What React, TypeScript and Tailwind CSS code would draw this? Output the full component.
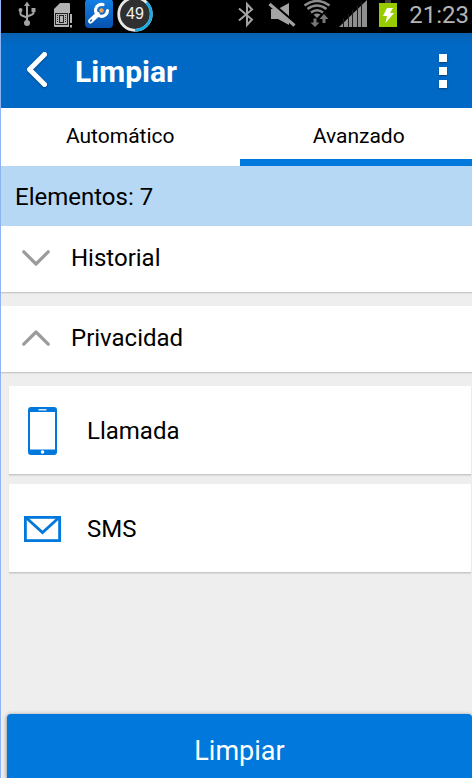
import * as React from "react";
import clsx from "clsx";

const UsbIcon = () => (
  <svg viewBox="15 0 26 28" className="h-7 w-[26px]" fill="none" stroke="#a3a3a3" strokeWidth="2" aria-label="USB">
    <path d="M27 4v18M20.500 9.500v4.500c0 2 6.500 2.500 6.500 4.500M33.500 9v4c0 2-6.500 2.500-6.500 4.500" />
    <path d="M27 1.500l3 4.500h-6z" fill="#a3a3a3" stroke="none" />
    <circle cx="27" cy="23" r="3" fill="#a3a3a3" stroke="none" />
    <circle cx="20.500" cy="10" r="2" fill="#a3a3a3" stroke="none" />
    <path d="M31.500 8h4v4h-4z" fill="#a3a3a3" stroke="none" />
  </svg>
);

const SimIcon = () => (
  <svg viewBox="51 0 24 28" className="h-7 w-6" fill="none" aria-label="SIM">
    <path d="M60 3h9a1 1 0 0 1 1 1v23H55a1 1 0 0 1-1-1V9z" fill="#b3b3b3" />
    <rect x="69" y="13" width="4" height="15" fill="#000" />
    <rect x="55.500" y="13.500" width="12" height="11" stroke="#222" />
    <rect x="59.500" y="15.500" width="4" height="7" stroke="#222" />
    <path d="M57.500 15v8M65.500 15v8" stroke="#222" strokeDasharray="1 1" />
    <path d="M70 14h2v9h-2zM70 25h2v2.500h-2z" fill="#b3b3b3" />
  </svg>
);

const WrenchIcon = () => (
  <svg viewBox="85 0 28 28" className="h-7 w-7" fill="none" aria-label="Herramientas">
    <defs>
      <linearGradient id="wrench" x1="0" y1="0" x2="0" y2="1">
        <stop offset="0" stopColor="#1380e6" />
        <stop offset="1" stopColor="#0752ae" />
      </linearGradient>
    </defs>
    <rect x="85" y="-1" width="28" height="29" rx="4" fill="url(#wrench)" />
    <path d="M97.500 14.500l-7 6.500" stroke="#fff" strokeWidth="5" strokeLinecap="round" />
    <path d="M103 4.500a6 6 0 1 0 4.500 6" stroke="#fff" strokeWidth="3.200" strokeLinecap="round" />
    <path d="M91.500 20l-1 1" stroke="#0a63c2" strokeWidth="1.500" strokeLinecap="round" />
    <circle cx="101.500" cy="10.500" r="2.200" fill="#f5a04c" />
  </svg>
);

const BadgeIcon = () => (
  <svg viewBox="117 -3 36 35" className="-mt-[3px] h-[35px] w-9" fill="none" aria-label="49">
    <circle cx="135" cy="14" r="16.300" fill="#303030" stroke="#e8e8e8" strokeWidth="2.800" />
    <path d="M146.500 2.500a16.300 16.300 0 0 1-11.500 27.800" stroke="#19ace6" strokeWidth="2.800" />
    <text x="135" y="19" textAnchor="middle" fill="#f2f2f2" className="font-['Liberation_Sans',sans-serif] text-[16px]">
      49
    </text>
  </svg>
);

const BluetoothIcon = () => (
  <svg viewBox="232 0 26 28" className="h-7 w-[26px]" fill="none" stroke="#a3a3a3" strokeWidth="2" aria-label="Bluetooth">
    <path d="M237 8.500l13 11-5 5.500V4l5 5.500-13 11" />
  </svg>
);

const MuteIcon = () => (
  <svg viewBox="268 0 28 28" className="h-7 w-7" fill="#a3a3a3" aria-label="Silencio">
    <path d="M271 9h7l11-6v22l-11-6h-7z" />
    <path d="M269.500 1.500l26 22" stroke="#000" strokeWidth="3" />
    <path d="M269.500 4l25 21.500" stroke="#a3a3a3" strokeWidth="3" />
  </svg>
);

const WifiIcon = () => (
  <svg viewBox="304 0 27 28" className="h-7 w-[27px]" fill="none" aria-label="Wi-Fi">
    <path d="M304.500 5.500q12.500-9 25 0M307.500 9q9.500-7 19 0M311 12.500q6-4.500 12 0" stroke="#8c8c8c" strokeWidth="2.500" />
    <path d="M313.500 14.500q3.500-2 7 0l-3.500 3.500z" fill="#8c8c8c" />
    <path d="M316.500 18.500v4h3l-4.500 4.500-4.500-4.500h3v-4zM322.500 23v-4h-3l4.500-5 4.500 5h-3v4z" fill="#777" />
  </svg>
);

const SignalIcon = () => (
  <svg viewBox="339 0 28 28" className="h-7 w-7" aria-label="Cobertura">
    <path d="M339 27L367 0v27z" fill="#8f8f8f" />
    <path d="M343.500 27V18M348.500 27V14M352.500 27V10M357.500 27V6M361.500 27V2" stroke="#1c1c1c" />
  </svg>
);

const BatteryIcon = () => (
  <svg viewBox="375 0 26 28" className="h-7 w-[26px]" aria-label="Cargando">
    <path d="M385 0h6v3h-6z" fill="#444" />
    <path d="M379 3h18v24h-18z" fill="#99cc00" />
    <path d="M387 8h6l-3 5h4l-8.500 10 1.500-7h-4z" fill="#fff" />
  </svg>
);

const PhoneIcon = () => (
  <svg viewBox="0 0 38 48" className="h-12 w-[38px]" aria-hidden="true">
    <rect x="4" y="0" width="29" height="48" rx="3" fill="#0078dc" />
    <rect x="6" y="5" width="25" height="37.500" fill="#fff" />
    <path d="M14.500 2h8v1.500h-8z" fill="#d5e9fa" />
    <circle cx="18.500" cy="45" r="1.800" fill="#fff" />
  </svg>
);

const MailIcon = () => (
  <svg viewBox="0 0 38 48" className="h-12 w-[38px]" fill="none" stroke="#0078dc" strokeWidth="2.800" aria-hidden="true">
    <rect x="1.400" y="12.400" width="34.200" height="23.200" />
    <path d="M2.500 13l16 14.500 16-14.500" />
  </svg>
);

const Chevron = ({ open }: { open: boolean }) => (
  <svg
    viewBox="0 0 28 16"
    className={clsx("h-4 w-7", open && "rotate-180")}
    fill="none"
    stroke="#9b9b9b"
    strokeWidth="3.200"
    strokeLinecap="round"
    strokeLinejoin="round"
    aria-hidden="true"
  >
    <path d="M1.800 1.800L14 14 26.200 1.800" />
  </svg>
);

interface SectionProps {
  title: string;
  defaultOpen?: boolean;
  children?: React.ReactNode;
}

const Section: React.FC<SectionProps> = ({ title, defaultOpen = false, children }) => {
  const [open, setOpen] = React.useState(defaultOpen);

  return (
    <section>
      <button
        type="button"
        aria-expanded={open}
        onClick={() => setOpen(!open)}
        className="flex h-[67px] w-full items-center gap-[21px] border-b border-[#c8c8c8] bg-white pb-[3px] pl-[21px] text-left text-2xl shadow-[0_1px_0_#e2e2e2]"
      >
        <Chevron open={open} />
        {title}
      </button>
      {open && children && <ul className="flex flex-col gap-[9px] py-[13px] pr-px pl-2">{children}</ul>}
    </section>
  );
};

const Item = ({ icon, label }: { icon: React.ReactNode; label: string }) => (
  <li className="flex h-[89px] items-center gap-[25px] border-b border-[#c8c8c8] bg-white pt-px pl-[15px] text-2xl shadow-[0_1px_1px_#dcdcdc]">
    {icon}
    {label}
  </li>
);

const TABS = ["Automático", "Avanzado"];

export default function App() {
  const [tab, setTab] = React.useState("Avanzado");

  return (
    <div className="flex min-h-screen flex-col border-l border-[#8fb4f3] bg-[#eeeeee] font-[Roboto,sans-serif] text-black">
      <div className="flex h-[33px] items-start justify-between overflow-hidden bg-black pr-[3px] pl-[14px]">
        <div className="flex gap-[10px]">
          <UsbIcon />
          <SimIcon />
          <div className="flex gap-1">
            <WrenchIcon />
            <BadgeIcon />
          </div>
        </div>
        <div className="flex gap-2">
          <BluetoothIcon />
          <MuteIcon />
          <WifiIcon />
          <SignalIcon />
          <BatteryIcon />
          <span className="text-2xl leading-[30px] text-[#b4b4b4]">21:23</span>
        </div>
      </div>

      <header className="flex h-[75px] items-center justify-between bg-linear-to-b from-[#0961b0] to-[#0069c5] to-15% pr-[17px] pl-6 text-white">
        <div className="flex items-center gap-6">
          <button type="button" aria-label="Atrás">
            <svg viewBox="0 0 26 40" className="h-10 w-[26px] drop-shadow-[0_1px_1px_rgba(0,0,0,0.35)]" fill="none" stroke="#fff" strokeWidth="5" strokeLinecap="round" strokeLinejoin="round">
              <path d="M19.500 3.500L4.500 18.500 19.500 33.500" />
            </svg>
          </button>
          <h1 className="pt-0.5 text-3xl font-bold">Limpiar</h1>
        </div>
        <button type="button" aria-label="Más opciones" className="flex flex-col gap-[5px] px-2">
          <span className="size-2 bg-white shadow-[0_1px_2px_rgba(0,0,0,0.4)]" />
          <span className="size-2 bg-white shadow-[0_1px_2px_rgba(0,0,0,0.4)]" />
          <span className="size-2 bg-white shadow-[0_1px_2px_rgba(0,0,0,0.4)]" />
        </button>
      </header>

      <div role="tablist" className="grid h-[58px] grid-cols-2 gap-1.5 bg-white">
        {TABS.map((name) => (
          <button
            key={name}
            type="button"
            role="tab"
            aria-selected={tab === name}
            onClick={() => setTab(name)}
            className={clsx(
              "border-b-[7px] pt-1.5 pl-1.5 text-[21px]",
              tab === name ? "border-[#0078dc]" : "border-transparent"
            )}
          >
            {name}
          </button>
        ))}
      </div>

      <p className="flex h-[60px] items-center bg-[#b6d8f4] pt-0.5 pl-[14px] text-2xl">Elementos: 7</p>

      <main className="flex grow flex-col gap-[13px]">
        <Section title="Historial" />
        <Section title="Privacidad" defaultOpen>
          <Item icon={<PhoneIcon />} label="Llamada" />
          <Item icon={<MailIcon />} label="SMS" />
        </Section>
      </main>

      <footer className="pl-[6px]">
        <button type="button" className="h-16 w-full rounded-t bg-[#0078dc] pt-2.5 text-[27px] text-white shadow-[0_1px_4px_rgba(0,0,0,0.5)]">
          Limpiar
        </button>
      </footer>
    </div>
  );
}
